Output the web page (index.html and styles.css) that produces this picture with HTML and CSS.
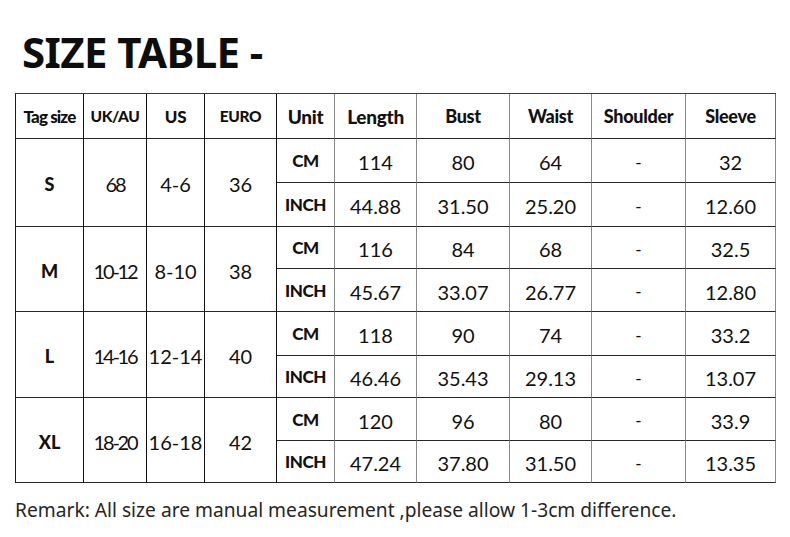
FILE: index.html
```html
<!DOCTYPE html>
<html lang="en">
<head>
<meta charset="utf-8">
<title>Size Table</title>
<link rel="stylesheet" href="styles.css">
</head>
<body>
<div class="page">
  <h1 class="title">SIZE TABLE -</h1>
  <table class="sizes">
    <thead>
      <tr class="r-head">
        <th class="k c1 tag">Tag size</th>
        <th class="k c2 sm">UK/AU</th>
        <th class="k c3 us">US</th>
        <th class="k c4 sm eu">EURO</th>
        <th class="m c5 big">Unit</th>
        <th class="m c6 big">Length</th>
        <th class="m c7">Bust</th>
        <th class="m c8">Waist</th>
        <th class="m c9">Shoulder</th>
        <th class="m c10">Sleeve</th>
      </tr>
    </thead>
    <tbody>
      <tr class="h44">
        <td class="k sz" rowspan="2">S</td>
        <td class="k tight" rowspan="2">68</td>
        <td class="k" rowspan="2">4-6</td>
        <td class="k" rowspan="2">36</td>
        <td class="m unit">CM</td><td class="m">114</td><td class="m">80</td><td class="m">64</td><td class="m dash">-</td><td class="m">32</td>
      </tr>
      <tr class="h44">
        <td class="m unit">INCH</td><td class="m">44.88</td><td class="m">31.50</td><td class="m">25.20</td><td class="m dash">-</td><td class="m">12.60</td>
      </tr>
      <tr class="h42">
        <td class="k sz" rowspan="2">M</td>
        <td class="k tight" rowspan="2">10-12</td>
        <td class="k" rowspan="2">8-10</td>
        <td class="k" rowspan="2">38</td>
        <td class="m unit">CM</td><td class="m">116</td><td class="m">84</td><td class="m">68</td><td class="m dash">-</td><td class="m">32.5</td>
      </tr>
      <tr class="h43">
        <td class="m unit">INCH</td><td class="m">45.67</td><td class="m">33.07</td><td class="m">26.77</td><td class="m dash">-</td><td class="m">12.80</td>
      </tr>
      <tr class="h44">
        <td class="k sz" rowspan="2">L</td>
        <td class="k tight" rowspan="2">14-16</td>
        <td class="k" rowspan="2">12-14</td>
        <td class="k" rowspan="2">40</td>
        <td class="m unit">CM</td><td class="m">118</td><td class="m">90</td><td class="m">74</td><td class="m dash">-</td><td class="m">33.2</td>
      </tr>
      <tr class="h42">
        <td class="m unit">INCH</td><td class="m">46.46</td><td class="m">35.43</td><td class="m">29.13</td><td class="m dash">-</td><td class="m">13.07</td>
      </tr>
      <tr class="h43">
        <td class="k sz" rowspan="2">XL</td>
        <td class="k tight" rowspan="2">18-20</td>
        <td class="k" rowspan="2">16-18</td>
        <td class="k" rowspan="2">42</td>
        <td class="m unit">CM</td><td class="m">120</td><td class="m">96</td><td class="m">80</td><td class="m dash">-</td><td class="m">33.9</td>
      </tr>
      <tr class="h42">
        <td class="m unit">INCH</td><td class="m">47.24</td><td class="m">37.80</td><td class="m">31.50</td><td class="m dash">-</td><td class="m">13.35</td>
      </tr>
    </tbody>
  </table>
  <p class="remark">Remark: All size are manual measurement ,please allow 1-3cm difference.</p>
</div>
</body>
</html>
```
FILE: styles.css
```css
html, body {
  margin: 0;
  padding: 0;
  background: #ffffff;
}

.page {
  width: 790px;
  height: 537px;
  padding-left: 15px;
  box-sizing: border-box;
  overflow: hidden;
  color: #111111;
}

.title {
  margin: 0 0 0 7px;
  padding-top: 27px;
  height: 93px;
  box-sizing: border-box;
  font-family: "Noto Sans", sans-serif;
  font-weight: 700;
  font-size: 42px;
  line-height: 50px;
  letter-spacing: -0.6px;
  color: #0d0d0d;
}

.sizes {
  border-collapse: separate;
  border-spacing: 0;
  table-layout: fixed;
  width: 761px;
  border-top: 1px solid #3a3a3a;
  border-left: 1px solid #1a1a1a;
  font-family: Lato, sans-serif;
  color: #111111;
}

.sizes th,
.sizes td {
  box-sizing: border-box;
  padding: 0;
  text-align: center;
  vertical-align: middle;
  border-bottom: 1px solid #262626;
  border-right: 1px solid #8a8a8a;
}

.sizes .k {
  border-right-color: #111111;
}

.sizes .c10 {
  border-right-color: #6a6a6a;
}

.c1 { width: 68px; }
.c2 { width: 63px; }
.c3 { width: 58px; }
.c4 { width: 72px; }
.c5 { width: 58px; }
.c6 { width: 82px; }
.c7 { width: 93px; }
.c8 { width: 82px; }
.c9 { width: 94px; }
.c10 { width: 90px; }

.r-head { height: 45px; }
.h42 { height: 42px; }
.h43 { height: 43px; }
.h44 { height: 44px; }

.sizes th {
  font-weight: 900;
  font-size: 18px;
  letter-spacing: -0.3px;
}

.sizes th.big {
  font-size: 19px;
}

.sizes th.tag {
  font-size: 17px;
  letter-spacing: -0.9px;
}

.sizes th.sm {
  font-size: 15.5px;
  letter-spacing: -0.4px;
}

.sizes th.us {
  font-size: 17px;
}

.sizes td {
  font-size: 20px;
  font-weight: 400;
  padding-top: 3px;
}

.sizes td.sz {
  font-weight: 900;
  font-size: 18px;
}

.sizes td.tight {
  letter-spacing: -2.2px;
}

.sizes td.unit {
  font-weight: 900;
  font-size: 17px;
  letter-spacing: -0.4px;
  padding-top: 0;
}

.sizes td.dash {
  font-size: 17px;
}

.remark {
  margin: 15px 0 0 0;
  font-family: "Noto Sans", sans-serif;
  font-size: 19.2px;
  line-height: 24px;
  color: #262626;
}
```
